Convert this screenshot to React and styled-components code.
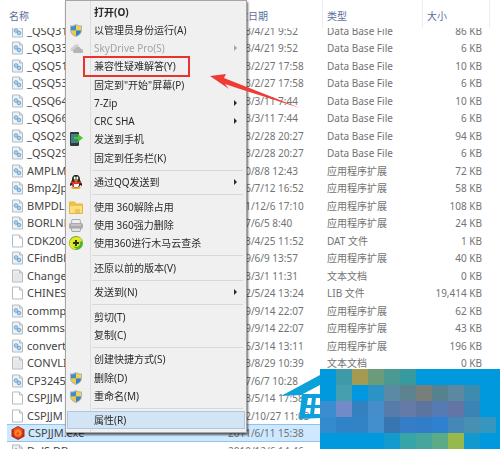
import { useLayoutEffect, useRef } from "react";
import styled, { createGlobalStyle } from "styled-components";

const GlobalStyle = createGlobalStyle`
  body {
    margin: 0;
    background: #fff;
    overflow: hidden;
    font-family: "Noto Sans", "Noto Sans CJK SC", sans-serif;
    font-size: 10px;
  }
`;

const Desktop = styled.div`
  position: relative;
  height: 100vh;
  overflow: hidden;
`;

const FileList = styled.div`
  height: 100%;
  overflow: hidden;
  padding: 0 10px 0 7px;
`;

const Table = styled.table`
  width: 100%;
  table-layout: fixed;
  border-collapse: separate;
  border-spacing: 0;
  line-height: 16px;
  white-space: nowrap;
`;

const HeadCell = styled.th`
  position: sticky;
  top: 0;
  z-index: 1;
  box-sizing: border-box;
  width: ${(props) => props.$width};
  height: 28px;
  padding: 4px 0 0 ${(props) => props.$indent || "4px"};
  border-right: 1px solid #e9eef4;
  background: #fff;
  color: #5c6f9a;
  font-weight: normal;
  text-align: left;
`;

const Row = styled.tr`
  height: 17px;
  color: #737373;
  background: ${(props) => (props.$selected ? "#cde8ff" : "transparent")};

  &:nth-child(even) {
    height: 18px;
  }
`;

const Cell = styled.td`
  padding: 0 8px 0 4px;
  overflow: hidden;
  text-align: ${(props) => props.$align || "left"};
  box-shadow: ${(props) =>
    props.$selected ? "inset 0 1px #8fc4ee, inset 0 -1px #8fc4ee" : "none"};
`;

const FileName = styled.div`
  display: flex;
  align-items: center;
  gap: 3px;
  color: #444;
  font-size: 11px;
`;

const Menu = styled.ul`
  position: absolute;
  top: 0;
  left: 65px;
  z-index: 2;
  box-sizing: border-box;
  width: 182px;
  margin: 0;
  padding: 2px 1px;
  list-style: none;
  border: 1px solid #a5a5a5;
  background: linear-gradient(90deg, #f0f0f0 24px, #dedede 24px, #dedede 25px, #f0f0f0 25px);
  box-shadow: 1px 2px 2px rgba(0, 0, 0, 0.6);

  > li:nth-child(4n) {
    padding-bottom: 1px;
  }
`;

const Separator = styled.li`
  height: 6px;

  &::before {
    content: "";
    display: block;
    height: 3px;
    margin: 0 2px 0 25px;
    border-bottom: 1px solid #d8d8d8;
  }
`;

const MenuButton = styled.button`
  display: flex;
  align-items: center;
  box-sizing: border-box;
  width: 100%;
  height: 18px;
  padding: 0 7px 0 1px;
  border: 1px solid ${(props) => (props.$active ? "#a9c8e4" : "transparent")};
  background: ${(props) => (props.$active ? "#d3e4f5" : "transparent")};
  color: ${(props) => (props.disabled ? "#a3a3a3" : "#2a2a2a")};
  font-family: inherit;
  font-size: 10px;
  font-weight: ${(props) => (props.$bold ? "bold" : "normal")};
  line-height: 16px;
  text-align: left;
  white-space: nowrap;
`;

const MenuIcon = styled.span`
  display: flex;
  justify-content: center;
  width: 14px;
  margin-right: 11px;
`;

const Label = styled.span`
  flex: 1;
`;

const Submenu = styled.span`
  border: 3px solid transparent;
  border-right: 0;
  border-left: 3px solid currentColor;
`;

const Highlight = styled.div`
  position: absolute;
  top: 56px;
  left: 83px;
  z-index: 3;
  box-sizing: border-box;
  width: 107px;
  height: 21px;
  border: 2px solid #e8332f;
`;

const Pointer = styled.svg`
  position: absolute;
  top: 70px;
  left: 208px;
  z-index: 3;
`;

const Watermark = styled.div`
  position: absolute;
  right: 0;
  bottom: 0;
  z-index: 1;
  display: flex;
  align-items: flex-end;
`;

const FileIcon = ({ type }) => {
  if (type === "exe") {
    return (
      <svg width="14" height="14" viewBox="0 0 14 14">
        <path d="M7 0l6.500 3.500v7L7 14 .5 10.500v-7z" fill="#b92a16" />
        <path d="M7 1l5 3-5 3-5-3z" fill="#ef5a2b" />
        <circle cx="7" cy="7" r="4.500" fill="#f4511f" />
        <circle cx="7" cy="7" r="3.300" fill="#ff8b24" />
        <path d="M5 8l2-3 1 2 1-1-2 4z" fill="#f0501c" />
      </svg>
    );
  }
  return (
    <svg width="13" height="14" viewBox="0 0 13 14">
      <path
        d="M1.500 1h7l3 3v9h-10z"
        fill={type === "text" ? "#eceeef" : type === "dll" ? "#e9f2f9" : "#fff"}
        stroke="#b4bbc1"
      />
      <path d="M8.500 1v3h3" fill="none" stroke="#b4bbc1" />
      {type === "text" && <path d="M3 5h6M3 7h7M3 9h7M3 11h7" stroke="#dcdfe1" />}
      {type === "dll" && (
        <g fill="#b5d3ea" stroke="#74a3cb">
          <circle cx="5" cy="6.500" r="1.800" />
          <circle cx="8" cy="9" r="1.800" />
        </g>
      )}
    </svg>
  );
};

const Shield = () => (
  <svg width="12" height="13" viewBox="0 0 12 13">
    <path d="M6 0c2 1 3.500 1.500 6 1.500V6c0 3.500-3 6-6 7-3-1-6-3.500-6-7V1.500C2.500 1.500 4 1 6 0z" fill="#a9b6bd" />
    <path d="M6 1.200V6.500H1v-4C3 2.500 4.500 2 6 1.200z" fill="#3d8ecb" />
    <path d="M6 1.200c1.500.8 3 1.300 5 1.300v4H6z" fill="#f5d348" />
    <path d="M1 6.500h5V12c-3-1-5-3-5-5.500z" fill="#f2ca3c" />
    <path d="M11 6.500H6V12c3-1 5-3 5-5.500z" fill="#3485c6" />
  </svg>
);

const icons = {
  shield: <Shield />,
  cloud: (
    <svg width="13" height="9" viewBox="0 0 13 9">
      <path d="M1 7c-1-2 0-4 2-4 1-3 5-4 6-1L4 7z" fill="#cfcfcf" />
      <path d="M4 9c-2-1-1-4 1-4 1-3 5-3 6 0 3 0 3 4 1 4z" fill="#b5b5b5" />
    </svg>
  ),
  phone: (
    <svg width="13" height="14" viewBox="0 0 13 14">
      <rect x="0" y="0" width="9" height="14" rx="1" fill="#303b3c" />
      <path d="M1 2h7v9H1z" fill="#438184" />
      <path d="M4 5h4V2l5 4-5 4V7H4z" fill="#49c829" />
    </svg>
  ),
  penguin: (
    <svg width="14" height="14" viewBox="0 0 14 14">
      <path d="M7 0C4 0 3 2 3 5L1 9v2l2-1c0 2 2 3 4 3s4-1 4-3l2 1V9l-2-4c0-3-1-5-4-5z" fill="#222" />
      <ellipse cx="7" cy="9.500" rx="3" ry="3" fill="#fff" />
      <path d="M2 6c3 1.500 7 1.500 10 0v2C9 9.500 5 9.500 2 8z" fill="#e52c22" />
      <path d="M3 8l2 .5V11H3z" fill="#e52c22" />
      <ellipse cx="5.700" cy="3" rx="1" ry="1.400" fill="#fff" />
      <ellipse cx="8.300" cy="3" rx="1" ry="1.400" fill="#fff" />
      <ellipse cx="7" cy="5" rx="2.500" ry=".8" fill="#f5a31b" />
      <path d="M2 13c0-1.500 4-1.500 5 0 1-1.500 5-1.500 5 0l-2 1H4z" fill="#f5a31b" />
    </svg>
  ),
  folder: (
    <svg width="14" height="13" viewBox="0 0 14 13">
      <path d="M.5 1h5l1.500 2h6.500v9.500H.5z" fill="#f0c343" stroke="#e3b644" />
      <path d="M1 5h12v7H1z" fill="#fae07f" />
      <path d="M6 9h5M6 11h5" stroke="#d9ac45" />
    </svg>
  ),
  shredder: (
    <svg width="14" height="13" viewBox="0 0 14 13">
      <path d="M3 .5h8l1 5H2z" fill="#eee" stroke="#aaa" />
      <rect x="0" y="4" width="14" height="6" rx="2" fill="#aaa" />
      <path d="M2 6h10" stroke="#ddd" />
      <path d="M2 9h10l-1 3.500H3z" fill="#e4e4e4" stroke="#a6a6a6" />
    </svg>
  ),
  antivirus: (
    <svg width="14" height="14" viewBox="0 0 14 14">
      <circle cx="7" cy="7" r="7" fill="#4fb52b" />
      <path d="M1 10C-1 4 5-1 11 2c2 1 2 3 1 4C9 3 5 4 4 7s1 5 4 6c-3 1-6-1-7-3z" fill="#f8e51d" />
      <circle cx="7" cy="7" r="4" fill="#dce82a" />
      <path d="M7 4v6M4 7h6" stroke="#27331a" strokeWidth="2" />
    </svg>
  ),
};

const menuItems = [
  { label: "打开(O)", bold: true },
  { label: "以管理员身份运行(A)", icon: "shield" },
  { label: "SkyDrive Pro(S)", icon: "cloud", disabled: true, submenu: true },
  { label: "兼容性疑难解答(Y)" },
  { label: "固定到\"开始\"屏幕(P)" },
  { label: "7-Zip", submenu: true },
  { label: "CRC SHA", submenu: true },
  { label: "发送到手机", icon: "phone" },
  { label: "固定到任务栏(K)" },
  null,
  { label: "通过QQ发送到", icon: "penguin", submenu: true },
  null,
  { label: "使用 360解除占用", icon: "folder" },
  { label: "使用 360强力删除", icon: "shredder" },
  { label: "使用360进行木马云查杀", icon: "antivirus" },
  null,
  { label: "还原以前的版本(V)" },
  null,
  { label: "发送到(N)", submenu: true },
  null,
  { label: "剪切(T)" },
  { label: "复制(C)" },
  null,
  { label: "创建快捷方式(S)" },
  { label: "删除(D)", icon: "shield" },
  { label: "重命名(M)", icon: "shield" },
  null,
  { label: "属性(R)", active: true },
];

const DB = "Data Base File";
const DLL = "应用程序扩展";

const files = [
  ["dll", "_QSQ31", "2013/4/21 9:52", DB, "86 KB"],
  ["dll", "_QSQ33", "2013/4/21 9:52", DB, "6 KB"],
  ["dll", "_QSQ51", "2013/2/27 17:58", DB, "10 KB"],
  ["dll", "_QSQ53", "2013/2/27 17:58", DB, "6 KB"],
  ["dll", "_QSQ64", "2013/3/11 7:44", DB, "10 KB"],
  ["dll", "_QSQ66", "2013/3/11 7:44", DB, "6 KB"],
  ["dll", "_QSQ29", "2013/2/28 20:27", DB, "94 KB"],
  ["dll", "_QSQ29", "2013/2/28 20:27", DB, "6 KB"],
  ["dll", "AMPLM", "2010/8/8 12:43", DLL, "72 KB"],
  ["dll", "Bmp2Jp", "2006/7/12 16:52", DLL, "58 KB"],
  ["dll", "BMPDLL", "2011/12/6 17:10", DLL, "108 KB"],
  ["dll", "BORLND", "2007/6/5 8:40", DLL, "24 KB"],
  ["file", "CDK200", "2013/4/25 11:52", "DAT 文件", "1 KB"],
  ["dll", "CFindBla", "2009/6/9 13:57", DLL, "40 KB"],
  ["text", "Change", "2013/3/1 11:31", "文本文档", "0 KB"],
  ["file", "CHINES", "2012/5/24 13:24", "LIB 文件", "19,414 KB"],
  ["dll", "commp", "2009/9/14 22:07", DLL, "62 KB"],
  ["dll", "comms.", "2009/9/14 22:07", DLL, "43 KB"],
  ["dll", "convertl", "2006/3/14 13:11", DLL, "196 KB"],
  ["text", "CONVLI", "2013/8/29 10:39", "文本文档", "0 KB"],
  ["dll", "CP3245I", "2007/6/7 10:28", "", ""],
  ["file", "CSPJJM", "2013/5/14 17:58", "", ""],
  ["file", "CSPJJM", "2012/10/27 11:03", "", ""],
  ["exe", "CSPJJM.exe", "2011/6/11 15:38", "", ""],
  ["dll", "DelS.DB", "2010/12/6 14:46", "", ""],
];

const mosaic = [
  ["#0099dd", "#3d9aa6", "#a59a52", "#6b9b7b", "#4a9a93", "#369a9e", "#0099dd", "#0099dd", "#0099dd", "#0099dd", "#0099dd", "#0099dd"],
  ["#0099dd", "#459fae", "#0098e0", "#2b94c4", "#5b8aa5", "#5d8290", "#787f7b", "#56828f", "#5c88a0", "#3b8cae", "#0099dd", "#0099dd"],
  ["#3a8dce", "#738ac8", "#3382bf", "#458ecb", "#577ca9", "#657aa6", "#5b74a0", "#567bb3", "#6275a5", "#3984b4", "#0099dd", "#0099dd"],
  ["#348ccf", "#2f83c6", "#3183c5", "#438fcd", "#3776b1", "#357dc6", "#327dc9", "#2f80ce", "#4588b7", "#4890b1", "#3696bd", "#0099dd"],
  ["#0099dd", "#0099dd", "#0099dd", "#0099dd", "#139ace", "#36a5a8", "#46a69b", "#5aab86", "#96b84c", "#129ace", "#0099dd", "#0099dd"],
];

const App = () => {
  const listRef = useRef(null);

  // the list is scrolled a little, so its first row sits partly under the header
  useLayoutEffect(() => {
    listRef.current.scrollTop = 6;
  }, []);

  return (
    <Desktop>
      <GlobalStyle />
      <FileList ref={listRef}>
        <Table>
          <thead>
            <tr>
              <HeadCell $indent="2px">名称</HeadCell>
              <HeadCell $width="99px">修改日期</HeadCell>
              <HeadCell $width="100px">类型</HeadCell>
              <HeadCell $width="67px">大小</HeadCell>
            </tr>
          </thead>
          <tbody>
            {files.map(([type, name, date, kind, size], i) => {
              const selected = type === "exe";
              return (
                <Row key={i} $selected={selected}>
                  <Cell $selected={selected}>
                    <FileName>
                      <FileIcon type={type} />
                      {name}
                    </FileName>
                  </Cell>
                  <Cell $selected={selected}>{date}</Cell>
                  <Cell $selected={selected}>{kind}</Cell>
                  <Cell $selected={selected} $align="right">{size}</Cell>
                </Row>
              );
            })}
          </tbody>
        </Table>
      </FileList>
      <Menu>
        {menuItems.map((item, i) =>
          item ? (
            <li key={i}>
              <MenuButton $bold={item.bold} $active={item.active} disabled={item.disabled}>
                <MenuIcon>{icons[item.icon]}</MenuIcon>
                <Label>{item.label}</Label>
                {item.submenu && <Submenu />}
              </MenuButton>
            </li>
          ) : (
            <Separator key={i} />
          )
        )}
      </Menu>
      <Highlight />
      <Pointer width="96" height="40" viewBox="0 0 96 40">
        <path d="M2 6L18 4l-2 4L92 38 32 19 17 14l4 5z" fill="#ee3c35" />
      </Pointer>
      <Watermark>
        <svg width="39" height="80" viewBox="0 0 39 80">
          <path d="M0 27L39 6v10L20 26z" fill="#0da1db" />
          <path
            d="M21 25h18v4H27l-1 7h13v3H25l-1 6h15v4l-21 1z M31 28h4l-2 18h-4z"
            fill="#0da1db"
          />
        </svg>
        <svg width="180" height="80" viewBox="0 0 180 80">
          {mosaic.map((row, y) =>
            row.map((fill, x) => (
              <rect key={`${x}-${y}`} x={x * 16} y={y * 16} width="16" height="16" fill={fill} />
            ))
          )}
        </svg>
      </Watermark>
    </Desktop>
  );
};

export default App;
